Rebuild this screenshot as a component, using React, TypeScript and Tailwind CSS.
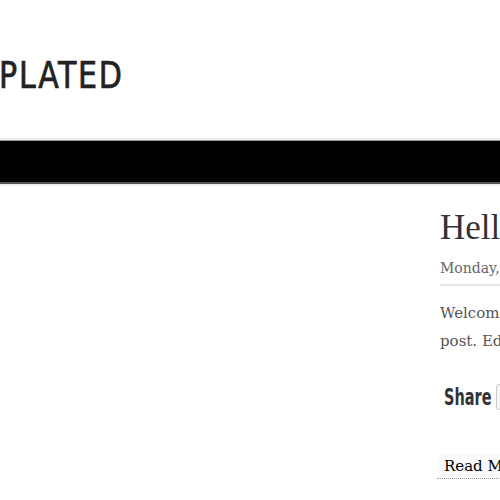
export default function App() {
  return (
    <div className="w-[500px] h-[500px] overflow-hidden bg-white relative">
      <div className="h-[138px] pt-[51px]">
        <div
          className="ml-[-1px] inline-block text-[38px] leading-[48px] text-[#222] tracking-[2px] font-normal [-webkit-text-stroke:0.7px_#222] scale-x-[0.88] origin-left"
          style={{ fontFamily: '"DejaVu Sans Condensed", "DejaVu Sans", sans-serif' }}
        >
          PLATED
        </div>
      </div>
      <div className="h-[2px] bg-[#eee]" />
      <div className="h-[44px] bg-black border-t border-[#999] border-b-2 border-b-[#555]" />
      <div className="h-[2px] bg-[#f2f2f2]" />
      <div className="flex">
        <div className="w-[440px] shrink-0" />
        <div className="w-[400px] shrink-0">
          <div
            className="mt-[21px] text-[35px] leading-[42px] text-[#333] whitespace-nowrap"
            style={{ fontFamily: '"Liberation Serif", serif' }}
          >
            Hello World!
          </div>
          <div
            className="mt-[9px] text-[14px] leading-[20px] text-[#666] whitespace-nowrap"
            style={{ fontFamily: '"DejaVu Serif", serif' }}
          >
            Monday, July 1, 2013
          </div>
          <div className="mt-[6px] h-[2px] bg-[#e5e5e5] w-[400px]" />
          <div
            className="mt-[13px] text-[15px] leading-[28px] text-[#555] whitespace-nowrap"
            style={{ fontFamily: '"DejaVu Serif", serif' }}
          >
            <div>Welcome to your first blog</div>
            <div>post. Edit or delete it.</div>
          </div>
          <div className="mt-[27px] flex items-center ml-[4px]">
            <span
              className="w-[48px] inline-block text-[23px] leading-[30px] font-bold text-[#333] scale-x-[0.7] origin-left whitespace-nowrap"
              style={{ fontFamily: '"DejaVu Sans Condensed", sans-serif' }}
            >
              Share
            </span>
            <span className="ml-[4px] w-[40px] h-[26px] border border-[#ccc] rounded-[3px] bg-[#f5f5f5]" />
          </div>
          <div
            className="mt-[42px] -ml-[3px] inline-block bg-[#fafafa] border-b border-dotted border-[#999] px-[7px] text-[15px] leading-[24px] text-black whitespace-nowrap"
            style={{ fontFamily: '"DejaVu Serif", serif' }}
          >
            Read More
          </div>
        </div>
      </div>
    </div>
  );
}
